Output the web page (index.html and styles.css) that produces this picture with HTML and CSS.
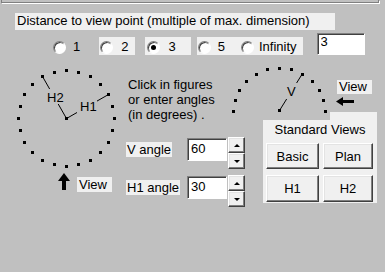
FILE: index.html
```html
<!DOCTYPE html>
<html lang="en">
<head>
    <meta charset="UTF-8">
    <title>View Point</title>
    <link rel="stylesheet" href="styles.css">
</head>
<body>
    <div class="frame-edge"></div>
    <div class="title">Distance to view point (multiple of max. dimension)</div>

    <div class="dist-row">
        <label class="opt opt-1"><span class="radio"></span>1</label>
        <label class="opt opt-2 lit"><span class="radio"></span>2</label>
        <label class="opt opt-3 lit"><span class="radio on"></span>3</label>
        <label class="opt opt-5 lit"><span class="radio"></span>5</label>
        <label class="opt opt-inf lit"><span class="radio"></span>Infinity</label>
        <input class="edit dist-edit" type="text" value="3">
    </div>

    <div class="main">
        <!-- plan figure: H1 / H2 directions -->
        <div class="plan-col">
            <svg class="plan-fig" width="126" height="110" viewBox="0 62 126 110">
                <g fill="#000">
                    <rect x="113" y="117" width="3" height="3"/>
                    <rect x="111" y="129" width="3" height="3"/>
                    <rect x="107" y="141" width="3" height="3"/>
                    <rect x="99" y="151" width="3" height="3"/>
                    <rect x="89" y="159" width="3" height="3"/>
                    <rect x="77" y="163" width="3" height="3"/>
                    <rect x="65" y="165" width="3" height="3"/>
                    <rect x="53" y="163" width="3" height="3"/>
                    <rect x="41" y="159" width="3" height="3"/>
                    <rect x="31" y="151" width="3" height="3"/>
                    <rect x="23" y="141" width="3" height="3"/>
                    <rect x="19" y="129" width="3" height="3"/>
                    <rect x="17" y="117" width="3" height="3"/>
                    <rect x="19" y="105" width="3" height="3"/>
                    <rect x="23" y="93" width="3" height="3"/>
                    <rect x="31" y="83" width="3" height="3"/>
                    <rect x="41" y="75" width="3" height="3"/>
                    <rect x="53" y="71" width="3" height="3"/>
                    <rect x="65" y="69" width="3" height="3"/>
                    <rect x="77" y="71" width="3" height="3"/>
                    <rect x="89" y="75" width="3" height="3"/>
                    <rect x="99" y="83" width="3" height="3"/>
                    <rect x="107" y="93" width="3" height="3"/>
                    <rect x="111" y="105" width="3" height="3"/>
                    <rect x="65" y="117" width="3" height="3"/>
                </g>
                <line x1="66.5" y1="118.5" x2="108.5" y2="94.5" stroke="#000"/>
                <line x1="66.5" y1="118.5" x2="42.5" y2="76.5" stroke="#000"/>
                <rect class="fig-gap" x="77" y="99" width="20" height="14"/>
                <rect class="fig-gap" x="45" y="89" width="19" height="15"/>
                <text class="fig-text" x="80" y="111">H1</text>
                <text class="fig-text" x="47" y="102">H2</text>
            </svg>
            <div class="view-mark">
                <svg class="arrow-up" width="12" height="17" viewBox="0 0 12 17">
                    <polygon points="6,0 12,8 8,8 8,17 4,17 4,8 0,8" fill="#000"/>
                </svg>
                <span class="view-tag">View</span>
            </div>
        </div>

        <div class="mid-col">
            <p class="hint">Click in figures<br>or enter angles<br>(in degrees) .</p>
            <div class="angle-row">
                <div class="angle-label"><span>V angle</span></div>
                <input class="edit angle-edit" type="text" value="60">
                <div class="spin">
                    <button class="spin-btn up"></button>
                    <button class="spin-btn down"></button>
                </div>
            </div>
            <div class="angle-row">
                <div class="angle-label"><span>H1 angle</span></div>
                <input class="edit angle-edit" type="text" value="30">
                <div class="spin">
                    <button class="spin-btn up"></button>
                    <button class="spin-btn down"></button>
                </div>
            </div>
        </div>

        <div class="side-col">
            <!-- elevation figure: V angle -->
            <div class="elev">
                <svg class="elev-fig" width="100" height="52" viewBox="230 62 100 52">
                    <g fill="#000">
                        <rect x="324" y="110" width="3" height="3"/>
                        <rect x="322" y="99" width="3" height="3"/>
                        <rect x="318" y="89" width="3" height="3"/>
                        <rect x="311" y="80" width="3" height="3"/>
                        <rect x="301" y="73" width="3" height="3"/>
                        <rect x="290" y="68" width="3" height="3"/>
                        <rect x="278" y="67" width="3" height="3"/>
                        <rect x="266" y="68" width="3" height="3"/>
                        <rect x="255" y="73" width="3" height="3"/>
                        <rect x="245" y="80" width="3" height="3"/>
                        <rect x="238" y="89" width="3" height="3"/>
                        <rect x="234" y="99" width="3" height="3"/>
                        <rect x="232" y="110" width="3" height="3"/>
                        <rect x="278" y="109" width="3" height="3"/>
                    </g>
                    <line x1="279.5" y1="110.5" x2="302.5" y2="73.5" stroke="#000"/>
                    <rect class="fig-gap" x="285" y="83" width="14" height="16"/>
                    <text class="fig-text" x="287" y="96">V</text>
                </svg>
                <div class="elev-view">
                    <span class="view-tag">View</span>
                    <svg class="arrow-left" width="18" height="9" viewBox="0 0 18 9">
                        <polygon points="0,4.5 7,0 7,3 18,3 18,6 7,6 7,9" fill="#000"/>
                    </svg>
                </div>
            </div>

            <div class="std-views">
                <div class="std-title">Standard Views</div>
                <div class="std-grid">
                    <button class="btn">Basic</button>
                    <button class="btn">Plan</button>
                    <button class="btn">H1</button>
                    <button class="btn">H2</button>
                </div>
            </div>
        </div>
    </div>
</body>
</html>
```

FILE: styles.css
```css
body {
    margin: 0;
    width: 385px;
    height: 272px;
    overflow: hidden;
    background: #c0c0c0;
    font-family: "Liberation Sans", Arial, sans-serif;
    font-size: 13px;
    color: #000;
}
.frame-edge {
    height: 2px;
    margin: 0 6px 0 1px;
    border: 1px solid #808080;
    border-top: 0;
    box-shadow: 1px 1px 0 #fff;
}
.title {
    width: 318px;
    margin: 10px 0 0 15px;
    padding: 0 0 2px 2px;
    line-height: 15px;
    background: #f0f0f0;
}

/* distance options */
.dist-row {
    display: flex;
    align-items: flex-start;
    height: 18px;
    margin-top: 7px;
}
.opt {
    display: flex;
    align-items: center;
    gap: 7px;
    height: 18px;
    box-sizing: border-box;
    padding-top: 2px;
    line-height: 14px;
}
.opt.lit {
    background: #f0f0f0;
}
.opt-1 { margin-left: 53px; }
.opt-2 { margin-left: 19px; padding-left: 1px; padding-right: 7px; gap: 8px; }
.opt-3 { margin-left: 10px; padding-left: 2px; padding-right: 15px; gap: 8px; }
.opt-5 { margin-left: 6px; padding-left: 1px; padding-right: 12px; }
.opt-inf { padding-left: 4px; padding-right: 6px; gap: 5px; }
.radio {
    position: relative;
    width: 11px;
    height: 11px;
    flex: none;
    border: 1px solid;
    border-color: #808080 #fff #fff #808080;
    border-radius: 50%;
    background: #fff;
    box-shadow: inset 1px 1px 0 #404040;
}
.radio.on::after {
    content: "";
    position: absolute;
    left: 3px;
    top: 3px;
    width: 5px;
    height: 5px;
    border-radius: 50%;
    background: #000;
}
.edit {
    box-sizing: border-box;
    margin: 0;
    border: 1px solid;
    border-color: #808080 #fff #fff #808080;
    box-shadow: inset 1px 1px 0 #404040;
    background: #fff;
    font: inherit;
    line-height: 15px;
    color: #000;
    outline: none;
}
.dist-edit {
    width: 48px;
    height: 22px;
    margin: -4px 0 0 14px;
    padding: 0 3px 6px;
}

/* main area */
.main {
    display: flex;
    margin-top: 7px;
}
.plan-col {
    width: 126px;
    flex: none;
}
.plan-fig, .elev-fig {
    display: block;
}
.fig-gap {
    fill: #c0c0c0;
}
.fig-text {
    font-family: "Liberation Sans", Arial, sans-serif;
    font-size: 13px;
    fill: #000;
}
.view-mark {
    display: flex;
    align-items: flex-start;
}
.arrow-up {
    margin: 1px 0 0 58px;
}
.view-tag {
    width: 33px;
    height: 15px;
    padding-left: 2px;
    line-height: 15px;
    background: #f0f0f0;
}
.view-mark .view-tag {
    margin: 5px 0 0 7px;
}

.mid-col {
    width: 124px;
    flex: none;
}
.hint {
    margin: 15px 0 0 2px;
    line-height: 15px;
}
.angle-row {
    display: flex;
    align-items: flex-start;
    height: 32px;
    margin-top: 6px;
}
.hint + .angle-row {
    margin-top: 15px;
}
.angle-label {
    width: 61px;
    margin-top: 5px;
    line-height: 15px;
}
.angle-label span {
    display: inline-block;
    padding: 0 1px;
    background: #f0f0f0;
}
.angle-edit {
    width: 40px;
    height: 23px;
    margin-top: 1px;
    padding: 2px 3px 5px;
}
.spin {
    display: flex;
    flex-direction: column;
    margin-left: 1px;
}
.spin-btn, .btn {
    box-sizing: border-box;
    margin: 0;
    padding: 0;
    border: 1px solid;
    border-color: #fff #404040 #404040 #fff;
    box-shadow: inset -1px -1px 0 #808080, inset 1px 1px 0 #e3e3e3;
    background: #f0f0f0;
    font: inherit;
    color: #000;
}
.spin-btn {
    position: relative;
    width: 17px;
    height: 16px;
}
.spin-btn::after {
    content: "";
    position: absolute;
    left: 5px;
    top: 6px;
    border-left: 3px solid transparent;
    border-right: 3px solid transparent;
}
.spin-btn.up::after {
    border-bottom: 3px solid #000;
}
.spin-btn.down::after {
    border-top: 3px solid #000;
}

.side-col {
    width: 135px;
    flex: none;
}
.elev {
    display: flex;
    margin-left: -20px;
}
.elev-view {
    display: flex;
    flex-direction: column;
    align-items: flex-start;
    margin-left: 7px;
}
.elev-view .view-tag {
    height: 14px;
    margin-top: 18px;
    line-height: 14px;
}
.arrow-left {
    margin: 3px 0 0 -1px;
}
.std-views {
    position: relative;
    width: 114px;
    margin: 6px 0 0 13px;
    padding-bottom: 1px;
    background: #f0f0f0;
}
/* light step at the top right of the panel */
.std-views::before {
    content: "";
    position: absolute;
    top: -8px;
    right: 0;
    width: 47px;
    height: 8px;
    background: #f0f0f0;
}
.std-title {
    padding-top: 2px;
    line-height: 15px;
    text-align: center;
}
.std-grid {
    display: grid;
    grid-template-columns: 53px 50px;
    grid-template-rows: 26px 27px;
    gap: 6px 4px;
    margin-top: 6px;
    padding-left: 3px;
}
```
